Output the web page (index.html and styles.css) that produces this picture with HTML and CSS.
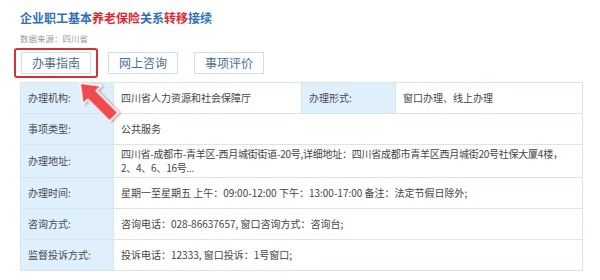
FILE: index.html
```html
<!DOCTYPE html>
<html lang="zh-CN">
<head>
    <meta charset="UTF-8">
    <meta name="viewport" content="width=device-width, initial-scale=1.0">
    <title>企业职工基本养老保险关系转移接续</title>
    <link rel="stylesheet" href="styles.css">
</head>
<body>

<div class="container">
    <h1 class="title">企业职工基本<span class="hl">养老保险</span>关系<span class="hl">转移</span>接续</h1>
    <p class="source">数据来源：四川省</p>

    <div class="tabs">
        <span class="mark"><a class="tab-btn">办事指南</a></span>
        <a class="tab-btn">网上咨询</a>
        <a class="tab-btn">事项评价</a>
    </div>

    <table class="guide">
        <colgroup>
            <col class="c-label">
            <col class="c-value">
            <col class="c-label2">
            <col>
        </colgroup>
        <tr>
            <th>办理机构:</th>
            <td>四川省人力资源和社会保障厅</td>
            <th>办理形式:</th>
            <td>窗口办理、线上办理</td>
        </tr>
        <tr>
            <th>事项类型:</th>
            <td colspan="3">公共服务</td>
        </tr>
        <tr>
            <th>办理地址:</th>
            <td colspan="3" class="addr">四川省-成都市-青羊区-西月城街街道-20号,详细地址：四川省成都市青羊区西月城街20号社保大厦4楼，2、4、6、16号...</td>
        </tr>
        <tr>
            <th>办理时间:</th>
            <td colspan="3">星期一至星期五 上午：09:00-12:00 下午：13:00-17:00 备注：法定节假日除外;</td>
        </tr>
        <tr>
            <th>咨询方式:</th>
            <td colspan="3">咨询电话：028-86637657, 窗口咨询方式：咨询台;</td>
        </tr>
        <tr>
            <th>监督投诉方式:</th>
            <td colspan="3">投诉电话：12333, 窗口投诉：1号窗口;</td>
        </tr>
    </table>

    <!-- pointer to the guide tab -->
    <svg class="pointer" width="70" height="70" viewBox="0 0 70 70">
        <defs>
            <filter id="shade" x="-30%" y="-30%" width="160%" height="160%">
                <feDropShadow dx="1" dy="1.5" stdDeviation="1.2" flood-color="#7a1010" flood-opacity="0.45"/>
            </filter>
        </defs>
        <g transform="translate(12,6) rotate(-45)" filter="url(#shade)">
            <polygon points="0,0 13,17 6,17 6,48 -6,48 -6,17 -13,17"
                     fill="#ee4b50" stroke="#ffffff" stroke-width="1.3" stroke-linejoin="round"/>
        </g>
    </svg>
</div>

</body>
</html>
```

FILE: styles.css
```css
body {
    font-family: "Noto Sans CJK SC", "Noto Sans", sans-serif;
    background-color: #fff;
    margin: 0;
    padding: 0;
    color: #333;
}
.container {
    position: relative;
    padding: 10px 17px 0 20px;
}
.title {
    margin: 0;
    font-size: 12px;
    line-height: 16px;
    font-weight: bold;
    color: #2f70bd;
}
.title .hl {
    color: #e3262e;
}
.source {
    margin: 6px 0 0;
    font-size: 8.5px;
    line-height: 12px;
    color: #9a9a9a;
}
.tabs {
    display: flex;
    gap: 16px;
    margin-top: 7px;
    align-items: center;
}
.mark {
    display: flex;
    padding: 2px 5px;
    margin: -3px -6px;
    border: 2px solid #d8312f;
    border-radius: 3px;
}
.tab-btn {
    display: block;
    width: 68px;
    height: 20px;
    line-height: 20px;
    text-align: center;
    font-size: 12px;
    color: #4b6f93;
    background-color: #fff;
    border: 1px solid #cfdfea;
}
.guide {
    width: 563px;
    margin-top: 7px;
    border-collapse: collapse;
    table-layout: fixed;
    font-size: 10px;
    line-height: 14px;
}
.c-label {
    width: 93px;
}
.c-value {
    width: 188px;
}
.c-label2 {
    width: 94px;
}
.guide th, .guide td {
    height: 31px;
    padding: 2px 7px;
    border: 1px solid #d6e6ee;
    text-align: left;
    font-weight: normal;
    color: #444;
    box-sizing: border-box;
}
.guide th {
    background-color: #dff0fc;
    color: #4a4a4a;
}
.guide .addr {
    padding-right: 16px;
    letter-spacing: -0.25px;
}
.pointer {
    position: absolute;
    left: 68px;
    top: 77px;
}
```
